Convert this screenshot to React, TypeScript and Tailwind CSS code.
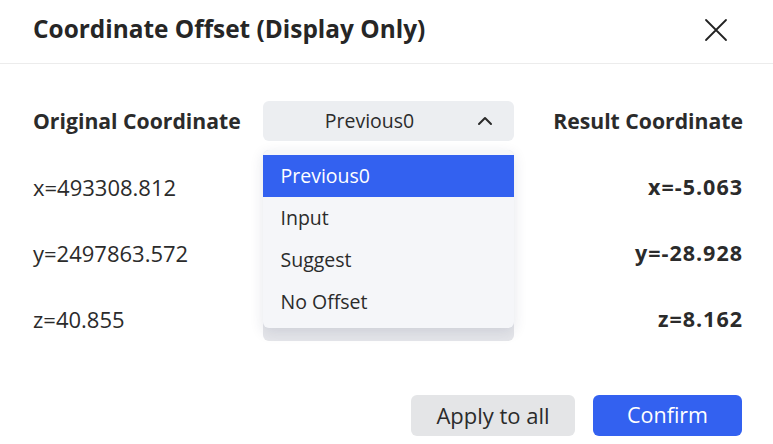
import React from "react";

const rows = [
  { original: "x=493308.812", result: "x=-5.063" },
  { original: "y=2497863.572", result: "y=-28.928" },
  { original: "z=40.855", result: "z=8.162" },
];

const options = ["Previous0", "Input", "Suggest", "No Offset"];

function CloseIcon() {
  return (
    <svg width="24" height="24" viewBox="0 0 24 24" fill="none" stroke="#222" strokeWidth="1.8" strokeLinecap="round">
      <path d="M2 2 L22 22 M22 2 L2 22" />
    </svg>
  );
}

function ChevronUp() {
  return (
    <svg width="16" height="10" viewBox="0 0 16 10" fill="none" stroke="#2a2a2a" strokeWidth="2" strokeLinecap="round" strokeLinejoin="round">
      <path d="M2 8 L8 2 L14 8" />
    </svg>
  );
}

function OffsetSelect() {
  const selected = 0;
  return (
    <div className="relative">
      <button className="flex h-10 w-full items-center rounded-md bg-[#eceef1] pr-[21px] text-[19.5px] text-[#2b2b2b]">
        <span className="flex-1 text-center">Previous0</span>
        <ChevronUp />
      </button>
      {/* sibling control peeking out below the open menu */}
      <div className="absolute left-0 right-0 top-[49px] h-[191px] rounded-md bg-[#e5e6ea]" />
      <ul className="absolute left-0 right-0 top-[49px] z-10 rounded-md bg-[#f5f6f9] py-[5px] shadow-[0_4px_14px_rgba(30,40,80,0.12)]">
        {options.map((o, i) => (
          <li
            key={o}
            className={
              i === selected
                ? "flex h-[42px] items-center bg-[#3361f0] pl-[18px] text-[19.5px] text-white"
                : "flex h-[42px] items-center pl-[18px] text-[19.5px] text-[#2b2b2b]"
            }
          >
            {o}
          </li>
        ))}
      </ul>
    </div>
  );
}

export default function App() {
  return (
    <div className="h-[444px] w-[773px] bg-white text-[#2b2b2b]" style={{ fontFamily: '"Open Sans", "Noto Sans", sans-serif' }}>
      <header className="flex h-16 items-center justify-between border-b border-[#ececec] pb-1 pl-[33px] pr-[45px]">
        <h2 className="text-[24.4px] font-bold text-[#262626]">Coordinate Offset (Display Only)</h2>
        <CloseIcon />
      </header>

      <div className="grid grid-cols-[1fr_251px_1fr] gap-y-[26px] pl-[33px] pr-[30px] pt-[37px]">
        <div className="flex h-10 items-center text-[21.2px] font-bold">Original Coordinate</div>
        <OffsetSelect />
        <div className="flex h-10 items-center justify-end text-[21.2px] font-bold">Result Coordinate</div>
        {rows.map((r) => (
          <React.Fragment key={r.original}>
            <div className="flex h-10 items-center text-[22px]">{r.original}</div>
            <div />
            <div className="flex h-10 items-center justify-end text-[21.5px] font-bold tracking-[1px]">{r.result}</div>
          </React.Fragment>
        ))}
      </div>

      <footer className="mt-[56px] flex justify-end gap-[18px] pr-[31px]">
        <button className="h-[41px] w-[164px] rounded-md bg-[#e4e5e7] text-[22px] text-[#2b2b2b]">Apply to all</button>
        <button className="h-[41px] w-[149px] rounded-md bg-[#3361f0] text-[21.5px] text-white">Confirm</button>
      </footer>
    </div>
  );
}
